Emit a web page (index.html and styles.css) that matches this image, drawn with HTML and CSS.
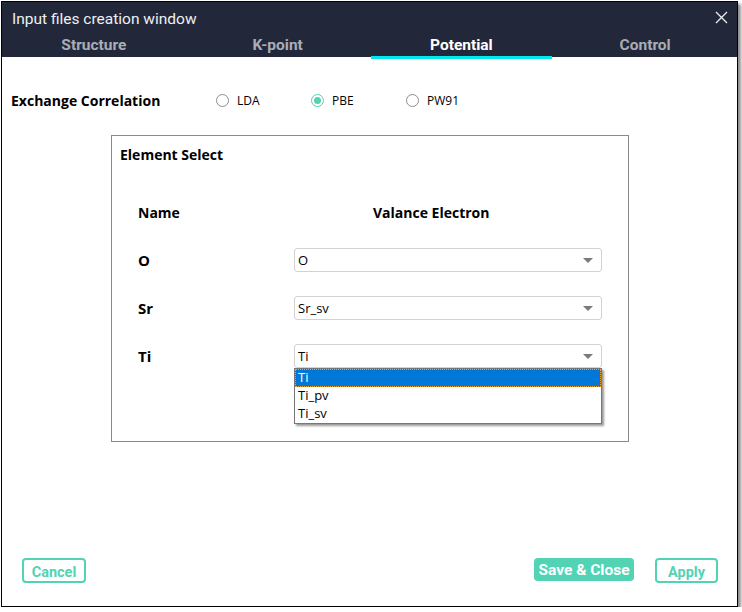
FILE: index.html
```html
<!DOCTYPE html>
<html>
<head>
<meta charset="utf-8">
<link rel="stylesheet" href="styles.css">
</head>
<body>
<div class="window">
  <div class="header">
    <div class="titlebar">
      <span class="title">Input files creation window</span>
      <svg class="close" width="13" height="13" viewBox="0 0 13 13"><path d="M1 1 L12 12 M12 1 L1 12" stroke="#e8eaee" stroke-width="1.4" fill="none"/></svg>
    </div>
    <div class="tabs">
      <div class="tab">Structure</div>
      <div class="tab">K-point</div>
      <div class="tab active">Potential</div>
      <div class="tab">Control</div>
    </div>
  </div>
  <div class="content">
    <div class="xc-row">
      <span class="xc-label">Exchange Correlation</span>
      <div class="radios">
        <label class="radio"><span class="circle"></span>LDA</label>
        <label class="radio checked"><span class="circle"></span>PBE</label>
        <label class="radio"><span class="circle"></span>PW91</label>
      </div>
    </div>
    <div class="element-box">
      <div class="box-title">Element Select</div>
      <div class="grid">
        <div class="col-head name">Name</div>
        <div class="col-head val">Valance Electron</div>
        <div class="el">O</div>
        <div class="select"><span>O</span><span class="arrow"></span></div>
        <div class="el">Sr</div>
        <div class="select"><span>Sr_sv</span><span class="arrow"></span></div>
        <div class="el">Ti</div>
        <div class="select open"><span>Ti</span><span class="arrow"></span>
          <div class="dropdown">
            <div class="opt selected">Ti</div>
            <div class="opt">Ti_pv</div>
            <div class="opt">Ti_sv</div>
          </div>
        </div>
      </div>
    </div>
  </div>
  <div class="footer">
    <button class="btn outline cancel">Cancel</button>
    <div class="right">
      <button class="btn filled">Save &amp; Close</button>
      <button class="btn outline apply">Apply</button>
    </div>
  </div>
</div>
</body>
</html>
```
FILE: styles.css
```css
html, body { margin: 0; padding: 0; background: #ffffff; }
body { padding: 1px 0 0 1px; }
.window {
  width: 735px;
  height: 604px;
  border: 1px solid #000;
  background: #fff;
  box-shadow: 3px 3px 3px rgba(0,0,0,0.45);
  display: flex;
  flex-direction: column;
  font-family: "Open Sans", "Noto Sans", sans-serif;
  color: #000;
}
.header { background: #222839; height: 55px; display: flex; flex-direction: column; }
.titlebar { height: 32px; display: flex; align-items: center; justify-content: space-between; padding: 1px 9px 0 10px; box-sizing: border-box; }
.title { font-family: Roboto, sans-serif; font-size: 15.5px; color: #eef0f3; }
.close { display: block; margin-top: -2px; }
.tabs { display: grid; grid-template-columns: repeat(4, 1fr); height: 23px; }
.tab { text-align: center; font-family: Roboto, sans-serif; font-weight: 700; font-size: 15.5px; color: #a9adb6; line-height: 22px; border-bottom: 3px solid transparent; margin: 0 1px; }
.tab.active { color: #ffffff; border-bottom-color: #00e8ee; }
.content { flex: 1; position: relative; }
.xc-row { display: flex; align-items: center; height: 22px; margin-top: 32px; padding-left: 9px; }
.xc-label { font-weight: 700; font-size: 14px; width: 205px; }
.radios { display: flex; }
.radio { display: flex; align-items: center; font-size: 12px; width: 95px; }
.circle { width: 11px; height: 11px; border: 1px solid #8e8e8e; border-radius: 50%; margin-right: 8px; box-sizing: content-box; position: relative; }
.radio.checked .circle { border-color: #52d3b4; }
.radio.checked .circle::after { content: ""; position: absolute; left: 2px; top: 2px; width: 7px; height: 7px; border-radius: 50%; background: #52d3b4; }
.element-box { margin: 24px 0 0 109px; width: 516px; height: 305px; border: 1px solid #8a8a8a; }
.box-title { font-weight: 700; font-size: 14px; padding: 9px 0 0 8px; line-height: 19px; }
.grid { display: grid; grid-template-columns: 156px 308px; grid-template-rows: 35px 48px 48px 48px; padding-left: 26px; margin-top: 37px; align-items: center; }
.col-head { font-weight: 700; font-size: 14px; line-height: 24px; align-self: start; }
.col-head.val { justify-self: start; margin-left: 79px; }
.el { font-weight: 700; font-size: 15px; }
.select { position: relative; height: 22px; border: 1px solid #d2d2d2; border-radius: 3px; display: flex; align-items: center; justify-content: space-between; padding: 0 8px 0 3px; font-size: 13px; }
.arrow { width: 0; height: 0; border-left: 5px solid transparent; border-right: 5px solid transparent; border-top: 5px solid #7b7b7b; }
.dropdown { position: absolute; left: -1px; top: 23px; width: 306px; border: 1px solid #777; background: #fff; box-shadow: 2px 2px 2px rgba(0,0,0,0.4); }
.opt { height: 18px; line-height: 17px; padding-left: 3px; font-size: 13px; box-sizing: border-box; }
.opt.selected { background: #0078d7; color: #fff; outline: 1px dotted #f0a030; outline-offset: -1px; }
.footer { height: 48px; display: flex; justify-content: space-between; align-items: flex-start; padding: 0 19px 0 20px; }
.right { display: flex; gap: 21px; }
.btn { font-family: Roboto, sans-serif; font-weight: 700; border-radius: 4px; cursor: pointer; padding: 0; text-align: center; }
.btn.outline { background: #fff; border: 2px solid #52d3b4; color: #52d3b4; height: 25px; padding-top: 4px; font-size: 14.5px; line-height: 18px; }
.btn.cancel { width: 64px; }
.btn.apply { width: 63px; }
.btn.filled { background: #52d3b4; border: none; color: #fff; height: 23px; width: 100px; font-size: 15.5px; line-height: 20px; }
```
